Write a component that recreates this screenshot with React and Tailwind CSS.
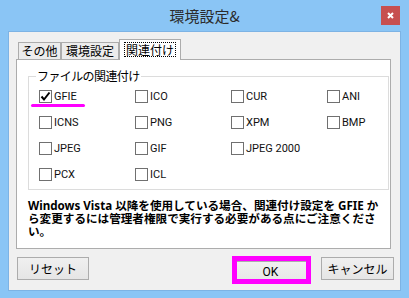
import React from 'react';

const cjk = "font-['Noto_Sans_CJK_JP',sans-serif]";
const latin = "font-['Roboto','Noto_Sans_CJK_JP',sans-serif]";

const formats = [
  ['GFIE', true], ['ICO'], ['CUR'], ['ANI'],
  ['ICNS'], ['PNG'], ['XPM'], ['BMP'],
  ['JPEG'], ['GIF'], ['JPEG 2000'], [null],
  ['PCX'], ['ICL'], [null], [null],
];

function Check({ label, checked }) {
  if (!label) return <div className="h-[13px]" />;
  return (
    <label className="flex items-center h-[13px] gap-[2px]">
      <span className="w-[13px] h-[13px] border border-[#707070] bg-white flex items-center justify-center shrink-0">
        {checked && (
          <svg width="11" height="11" viewBox="0 0 11 11">
            <path d="M1.5 5.5 L4 8.5 L9.5 1.5" fill="none" stroke="#000" strokeWidth="2" />
          </svg>
        )}
      </span>
      <span className={`${latin} text-[11px] leading-[13px] text-[#111] whitespace-nowrap`}>{label}</span>
    </label>
  );
}

function Button({ children, className = '' }) {
  return (
    <button className={`h-[23px] border border-[#acacac] bg-gradient-to-b from-[#f0f0f0] to-[#e5e5e5] text-[12px] leading-none text-black ${cjk} ${className}`}>
      {children}
    </button>
  );
}

export default function App() {
  return (
    <div className={`w-[409px] h-[298px] bg-[#8ac5f5] flex flex-col ${cjk}`}>
      {/* title bar */}
      <div className="h-[31px] flex items-start shrink-0">
        <div className="w-[28px]" />
        <div className="flex-1 text-center text-[15px] leading-[31px] text-[#2b2b2b]">環境設定&amp;</div>
        <button className="mt-[6px] mr-[9px] w-[19px] h-[19px] bg-[#c75050] flex items-center justify-center">
          <svg width="7" height="7" viewBox="0 0 7 7">
            <path d="M1 1 L6 6 M6 1 L1 6" stroke="#fff" strokeWidth="2" />
          </svg>
        </button>
      </div>

      {/* client area */}
      <div className="mx-[8px] h-[260px] border border-[#7db3e4] bg-[#f0f0f0] flex flex-col">
        {/* tabs */}
        <div className="mt-[7px] ml-[9px] h-[21px] flex items-end relative z-10 -mb-[1px]">
          <div className="w-[43px] h-[17px] mb-[1px] border border-b-0 border-[#acacac] bg-[#ececec] text-[12px] leading-[16px] text-center text-black">その他</div>
          <div className="w-[58px] h-[17px] mb-[1px] border border-b-0 border-[#acacac] bg-[#ececec] text-[12px] leading-[16px] text-center text-black">環境設定</div>
          <div className="w-[62px] h-[21px] border border-b-0 border-[#acacac] bg-white flex items-start justify-center pt-[2px]">
            <span className="border border-dotted border-black px-[1px] text-[12px] leading-[13px] text-black">関連付け</span>
          </div>
        </div>

        {/* tab panel */}
        <div className="ml-[7px] w-[375px] h-[190px] border border-[#acacac] bg-white relative flex flex-col">
          <fieldset className="ml-[11px] mt-[9px] w-[361px] min-w-0 h-[121px] border border-[#dcdcdc]">
            <legend className="ml-[7px] px-[1px] text-[12px] leading-[14px] tracking-[-0.6px] text-black">ファイルの関連付け</legend>
            <div className="mt-[7px] ml-[10px] grid grid-cols-[96px_96px_96px_56px] gap-y-[13px]">
              {formats.map(([label, checked], i) => (
                <Check key={i} label={label} checked={checked} />
              ))}
            </div>
          </fieldset>

          <p className="ml-[11px] mt-[9px] text-[11.6px] leading-[13px] font-bold text-black whitespace-nowrap font-['Noto_Sans','Noto_Sans_CJK_JP',sans-serif]">
            Windows Vista 以降を使用している場合、関連付け設定を GFIE か<br />
            ら変更するには管理者権限で実行する必要がある点にご注意くださ<br />
            い。
          </p>

          {/* annotation underline */}
          <div className="absolute left-[14px] top-[44px] w-[54px] h-[3px] rounded-full bg-[#f0f]" />
        </div>

        {/* buttons */}
        <div className="mt-[8px] flex">
          <Button className="ml-[8px] w-[72px]">リセット</Button>
          <div className="ml-[145px] relative">
            <Button className={`w-[73px] ${latin}`}>OK</Button>
            <div className="absolute left-[-2px] top-[-1px] w-[79px] h-[28px] border-[5px] border-[#f0f]" />
          </div>
          <Button className="ml-[14px] w-[73px]">キャンセル</Button>
        </div>
      </div>
    </div>
  );
}
